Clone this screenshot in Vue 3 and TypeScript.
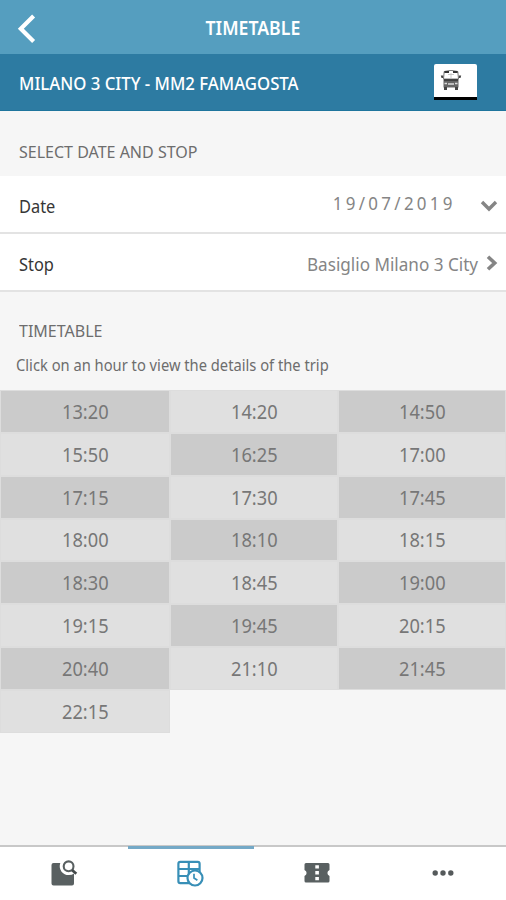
<script setup lang="ts">
const times: string[] = [
  '13:20', '14:20', '14:50', '15:50', '16:25', '17:00',
  '17:15', '17:30', '17:45', '18:00', '18:10', '18:15',
  '18:30', '18:45', '19:00', '19:15', '19:45', '20:15',
  '20:40', '21:10', '21:45', '22:15',
]
</script>

<template>
  <div class="screen">
    <header class="topbar">
      <svg class="back" width="20" height="30" viewBox="0 0 20 30">
        <path d="M16.6 2 L3.8 14.8 L16.6 27.6" fill="none" stroke="#fff" stroke-width="4.2" />
      </svg>
      <h1 class="t title">TIMETABLE</h1>
    </header>

    <div class="route">
      <span class="t route-name">MILANO 3 CITY - MM2 FAMAGOSTA</span>
      <div class="badge">
        <svg width="22" height="21" viewBox="0 0 22 21">
          <path d="M4.2 1.5 Q11 -0.8 17.8 1.5 L18.5 9 H3.5 Z" fill="#fff" stroke="#777" stroke-width="1" />
          <path d="M4.5 1 H9 V3 H4.3 Z M13 1 H17.5 L17.7 3 H13 Z" fill="#333" />
          <path d="M11 3 V8 M8 4.5 H14" stroke="#bbb" stroke-width=".8" />
          <path d="M.8 5.5 H3.2 V8 H1.5 Z M18.8 5.5 H21.2 L20.5 8 H18.8 Z" fill="#444" />
          <path d="M3.5 9 H18.5 V17.5 H3.5 Z" fill="#666" />
          <path d="M4 10 H18" stroke="#333" stroke-width="1.4" />
          <path d="M4.5 13.5 H7 M15 13.5 H17.5 M8 14 H14" stroke="#ddd" stroke-width="1.4" />
          <path d="M4 17 H7 V20 H4 Z M15 17 H18 V20 H15 Z" fill="#444" />
        </svg>
      </div>
    </div>

    <h2 class="section"><span class="t section-a">SELECT DATE AND STOP</span></h2>

    <div class="row">
      <span class="t label">Date</span>
      <span class="t date-value">19/07/2019</span>
      <svg class="down" width="18" height="12" viewBox="0 0 18 12">
        <path d="M2 2 L9 9 L16 2" fill="none" stroke="#858585" stroke-width="3.4" />
      </svg>
    </div>
    <div class="row">
      <span class="t label">Stop</span>
      <span class="t stop-value">Basiglio Milano 3 City</span>
      <svg class="next" width="12" height="16" viewBox="0 0 12 16">
        <path d="M2 1.7 L8.7 8 L2 14.3" fill="none" stroke="#858585" stroke-width="3.6" />
      </svg>
    </div>

    <section class="intro">
      <h2 class="t section-b">TIMETABLE</h2>
      <p class="t hint">Click on an hour to view the details of the trip</p>
    </section>

    <div class="grid">
      <button v-for="(time, i) in times" :key="time" class="cell" :class="{ dark: i % 2 === 0 && i < 21 }">
        <span class="t time">{{ time }}</span>
      </button>
    </div>

    <nav class="tabs">
      <a class="tab">
        <svg width="28" height="28" viewBox="0 0 28 28">
          <path d="M3.5 3 H10.3 A8.8 8.8 0 0 0 19 15 Q22 15 24 13.5 V23.5 Q24 25.5 22 25.5 H3.5 Q1.5 25.5 1.5 23.5 V5 Q1.5 3 3.5 3 Z" fill="#596061" />
          <circle cx="18.6" cy="6.3" r="4.9" fill="none" stroke="#596061" stroke-width="2.1" />
          <path d="M22 10 L26.3 13.8" stroke="#444a4b" stroke-width="2.8" />
        </svg>
      </a>
      <a class="tab active">
        <svg width="28" height="28" viewBox="0 0 28 28">
          <g fill="none" stroke="#388fb7" stroke-width="2.2">
            <rect x="2.4" y="1.9" width="21.2" height="21.2" rx="1.8" />
            <path d="M12.8 2 V23 M2.4 9 H23.6 M2.4 16 H14" />
            <circle cx="19" cy="18" r="7.5" fill="#fff" />
            <path d="M18 13.8 V18 L21.4 20.2" stroke-width="1.7" />
          </g>
        </svg>
      </a>
      <a class="tab">
        <svg class="ticket" width="28" height="22" viewBox="0 0 28 22">
          <path d="M3 1 H25 Q26.5 1 26.5 2.5 V8 A3.2 3.2 0 0 0 26.5 14 V19 Q26.5 20.5 25 20.5 H3 Q1.5 20.5 1.5 19 V14 A3.2 3.2 0 0 0 1.5 8 V2.5 Q1.5 1 3 1 Z" fill="#596061" />
          <path d="M12.3 3.3 H15.9 V6.5 H12.3 Z M12.3 9 H15.9 V12.4 H12.3 Z M12.3 15 H15.9 V18.2 H12.3 Z" fill="#fff" />
        </svg>
      </a>
      <a class="tab">
        <svg class="more" width="24" height="8" viewBox="0 0 24 8">
          <g fill="#555a5b">
            <circle cx="4.2" cy="4" r="2.7" />
            <circle cx="12" cy="4" r="2.7" />
            <circle cx="19.8" cy="4" r="2.7" />
          </g>
        </svg>
      </a>
    </nav>
  </div>
</template>

<style>
body {
  margin: 0;
}
</style>

<style scoped>
.screen {
  width: 506px;
  height: 900px;
  display: flex;
  flex-direction: column;
  overflow: hidden;
  background: #f6f6f6;
  font-family: "Noto Sans", "Open Sans", sans-serif;
  color: #6d6d6d;
}
.screen * {
  box-sizing: border-box;
}
.t {
  display: block;
  margin: 0;
  white-space: nowrap;
  font-weight: 400;
  transform-origin: left center;
}
.topbar {
  height: 54px;
  flex: none;
  display: grid;
  grid-template-columns: 60px 1fr 60px;
  align-items: center;
  background: #559ebf;
  color: #fff;
}
.back {
  margin: 3px 0 0 17px;
}
.title {
  justify-self: center;
  transform-origin: center;
  font-size: 19px;
  line-height: 24px;
  margin-top: 2px;
  font-weight: 600;
  transform: scaleX(.93);
}
.route {
  height: 57px;
  flex: none;
  display: flex;
  align-items: center;
  justify-content: space-between;
  padding: 0 29px 0 19px;
  background: #2d7ba2;
  border-bottom: 1px solid #1e759d;
  color: #fff;
}
.route-name {
  font-size: 18.5px;
  font-weight: 500;
  transform: scaleX(.906);
}
.badge {
  width: 43px;
  height: 36px;
  flex: none;
  padding: 6px 0 0 6px;
  background: #fff;
  border-bottom: 3px solid #000;
  border-radius: 2px 2px 0 0;
}
.badge svg {
  display: block;
}
.section {
  height: 65px;
  flex: none;
  margin: 0;
  padding: 29px 19px 0;
  line-height: 24px;
}
.section-a,
.section-b {
  font-size: 17px;
  transform: scaleX(.942);
}
.row {
  height: 58px;
  flex: none;
  display: flex;
  align-items: center;
  padding: 0 8px 0 19px;
  background: #fff;
  border-bottom: 2px solid #e3e3e3;
}
.label {
  color: #363636;
  font-size: 18px;
  margin-right: auto;
  padding-top: 3px;
  transform: scaleX(.91);
}
.date-value {
  font-size: 18px;
  letter-spacing: 3.5px;
  color: #858585;
  transform-origin: right center;
  transform: scaleX(.94);
  margin: 0 24px 2px 0;
}
.stop-value {
  font-size: 18px;
  color: #858585;
  transform-origin: right center;
  transform: scaleX(.95);
  margin-right: 8px;
  padding-top: 3px;
}
.down {
  margin-top: 4px;
}
.next {
  margin-top: 2px;
}
.intro {
  height: 98px;
  flex: none;
  padding: 27px 16px 0;
}
.section-b {
  margin-left: 3px;
  line-height: 24px;
}
.hint {
  margin-top: 11px;
  font-size: 15.5px;
  line-height: 22px;
  transform: scaleX(.949);
}
.grid {
  display: grid;
  grid-template-columns: 170px 168px 168px;
  grid-auto-rows: 42.85px;
}
.cell {
  display: flex;
  align-items: center;
  justify-content: center;
  padding: 1px 0 0;
  border: 1px solid #dddddd;
  background: #e0e0e0;
  font: inherit;
  color: #777;
}
.dark {
  background: #cbcbcb;
}
.time {
  font-size: 19px;
  line-height: 24px;
  transform-origin: center;
  transform: scaleX(.96);
}
.tabs {
  height: 55px;
  flex: none;
  margin-top: auto;
  display: grid;
  grid-template-columns: 127.5px 126px 126.5px 126px;
  background: #fff;
  border-top: 2px solid #c8c8c8;
}
.tab {
  display: flex;
  align-items: center;
  justify-content: center;
}
.active {
  border-top: 3px solid #74a9c7;
  margin-top: -1px;
  padding: 0 1px 2px 0;
}
.ticket,
.more {
  margin-bottom: 2px;
}
</style>
